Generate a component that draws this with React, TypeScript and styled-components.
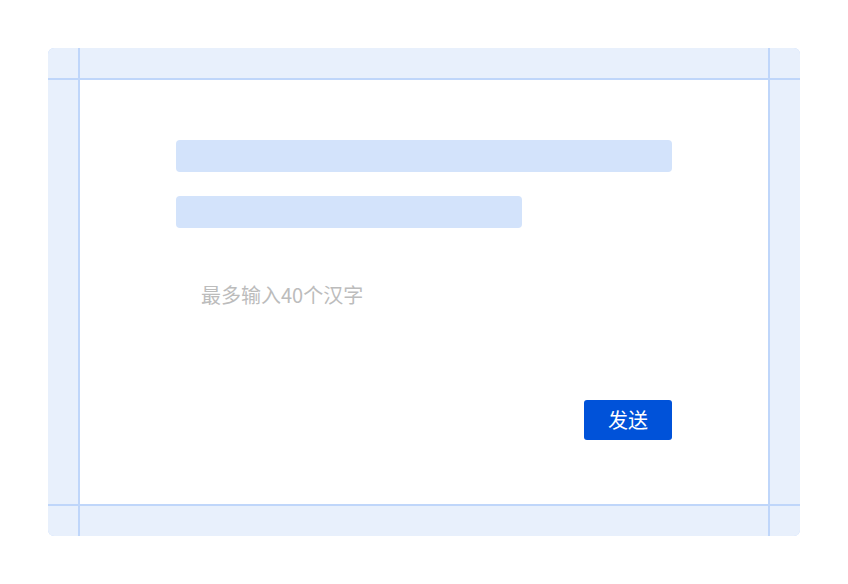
import * as React from "react"
import styled, { createGlobalStyle } from "styled-components"

const GlobalStyle = createGlobalStyle`
  html, body {
    margin: 0;
    padding: 0;
    background: #ffffff;
  }
  body {
    font-family: "Noto Sans CJK SC", "Noto Sans", sans-serif;
  }
`

const Page = styled.div`
  width: 848px;
  height: 584px;
  padding: 48px;
  box-sizing: border-box;
`

const Frame = styled.div`
  display: grid;
  grid-template-columns: 30px 1fr 30px;
  grid-template-rows: 30px 1fr 30px;
  gap: 2px;
  width: 752px;
  height: 488px;
  background: #bfd6fa;
  border-radius: 6px;
  overflow: hidden;
`

const Margin = styled.div`
  background: #e8f0fc;
`

const Content = styled.div`
  display: flex;
  flex-direction: column;
  background: #ffffff;
  padding: 60px 96px 0;
`

const Skeleton = styled.div<{ $width: number }>`
  width: ${p => p.$width}px;
  height: 32px;
  border-radius: 4px;
  background: #d3e3fb;
  margin-bottom: 24px;
`

const Input = styled.textarea`
  display: block;
  box-sizing: border-box;
  margin-top: 24px;
  height: 100px;
  padding: 5px 25px;
  border: none;
  outline: none;
  resize: none;
  background: transparent;
  font-family: "Noto Sans CJK SC", "Noto Sans", sans-serif;
  font-size: 20px;
  line-height: 28px;
  color: #333333;

  &::placeholder {
    color: #bcbcbc;
  }
`

const Footer = styled.div`
  display: flex;
  justify-content: flex-end;
  margin-top: 24px;
`

const SendButton = styled.button`
  width: 88px;
  height: 40px;
  border: none;
  border-radius: 3px;
  background: #0052d9;
  color: #ffffff;
  font-family: "Noto Sans CJK SC", "Noto Sans", sans-serif;
  font-size: 20px;
  line-height: 28px;
  padding: 0;
  cursor: pointer;
`

export default function App() {
  return (
    <>
      <GlobalStyle />
      <Page>
        <Frame>
          <Margin />
          <Margin />
          <Margin />
          <Margin />
          <Content>
            <Skeleton $width={496} />
            <Skeleton $width={346} />
            <Input placeholder="最多输入40个汉字" />
            <Footer>
              <SendButton>发送</SendButton>
            </Footer>
          </Content>
          <Margin />
          <Margin />
          <Margin />
          <Margin />
        </Frame>
      </Page>
    </>
  )
}
